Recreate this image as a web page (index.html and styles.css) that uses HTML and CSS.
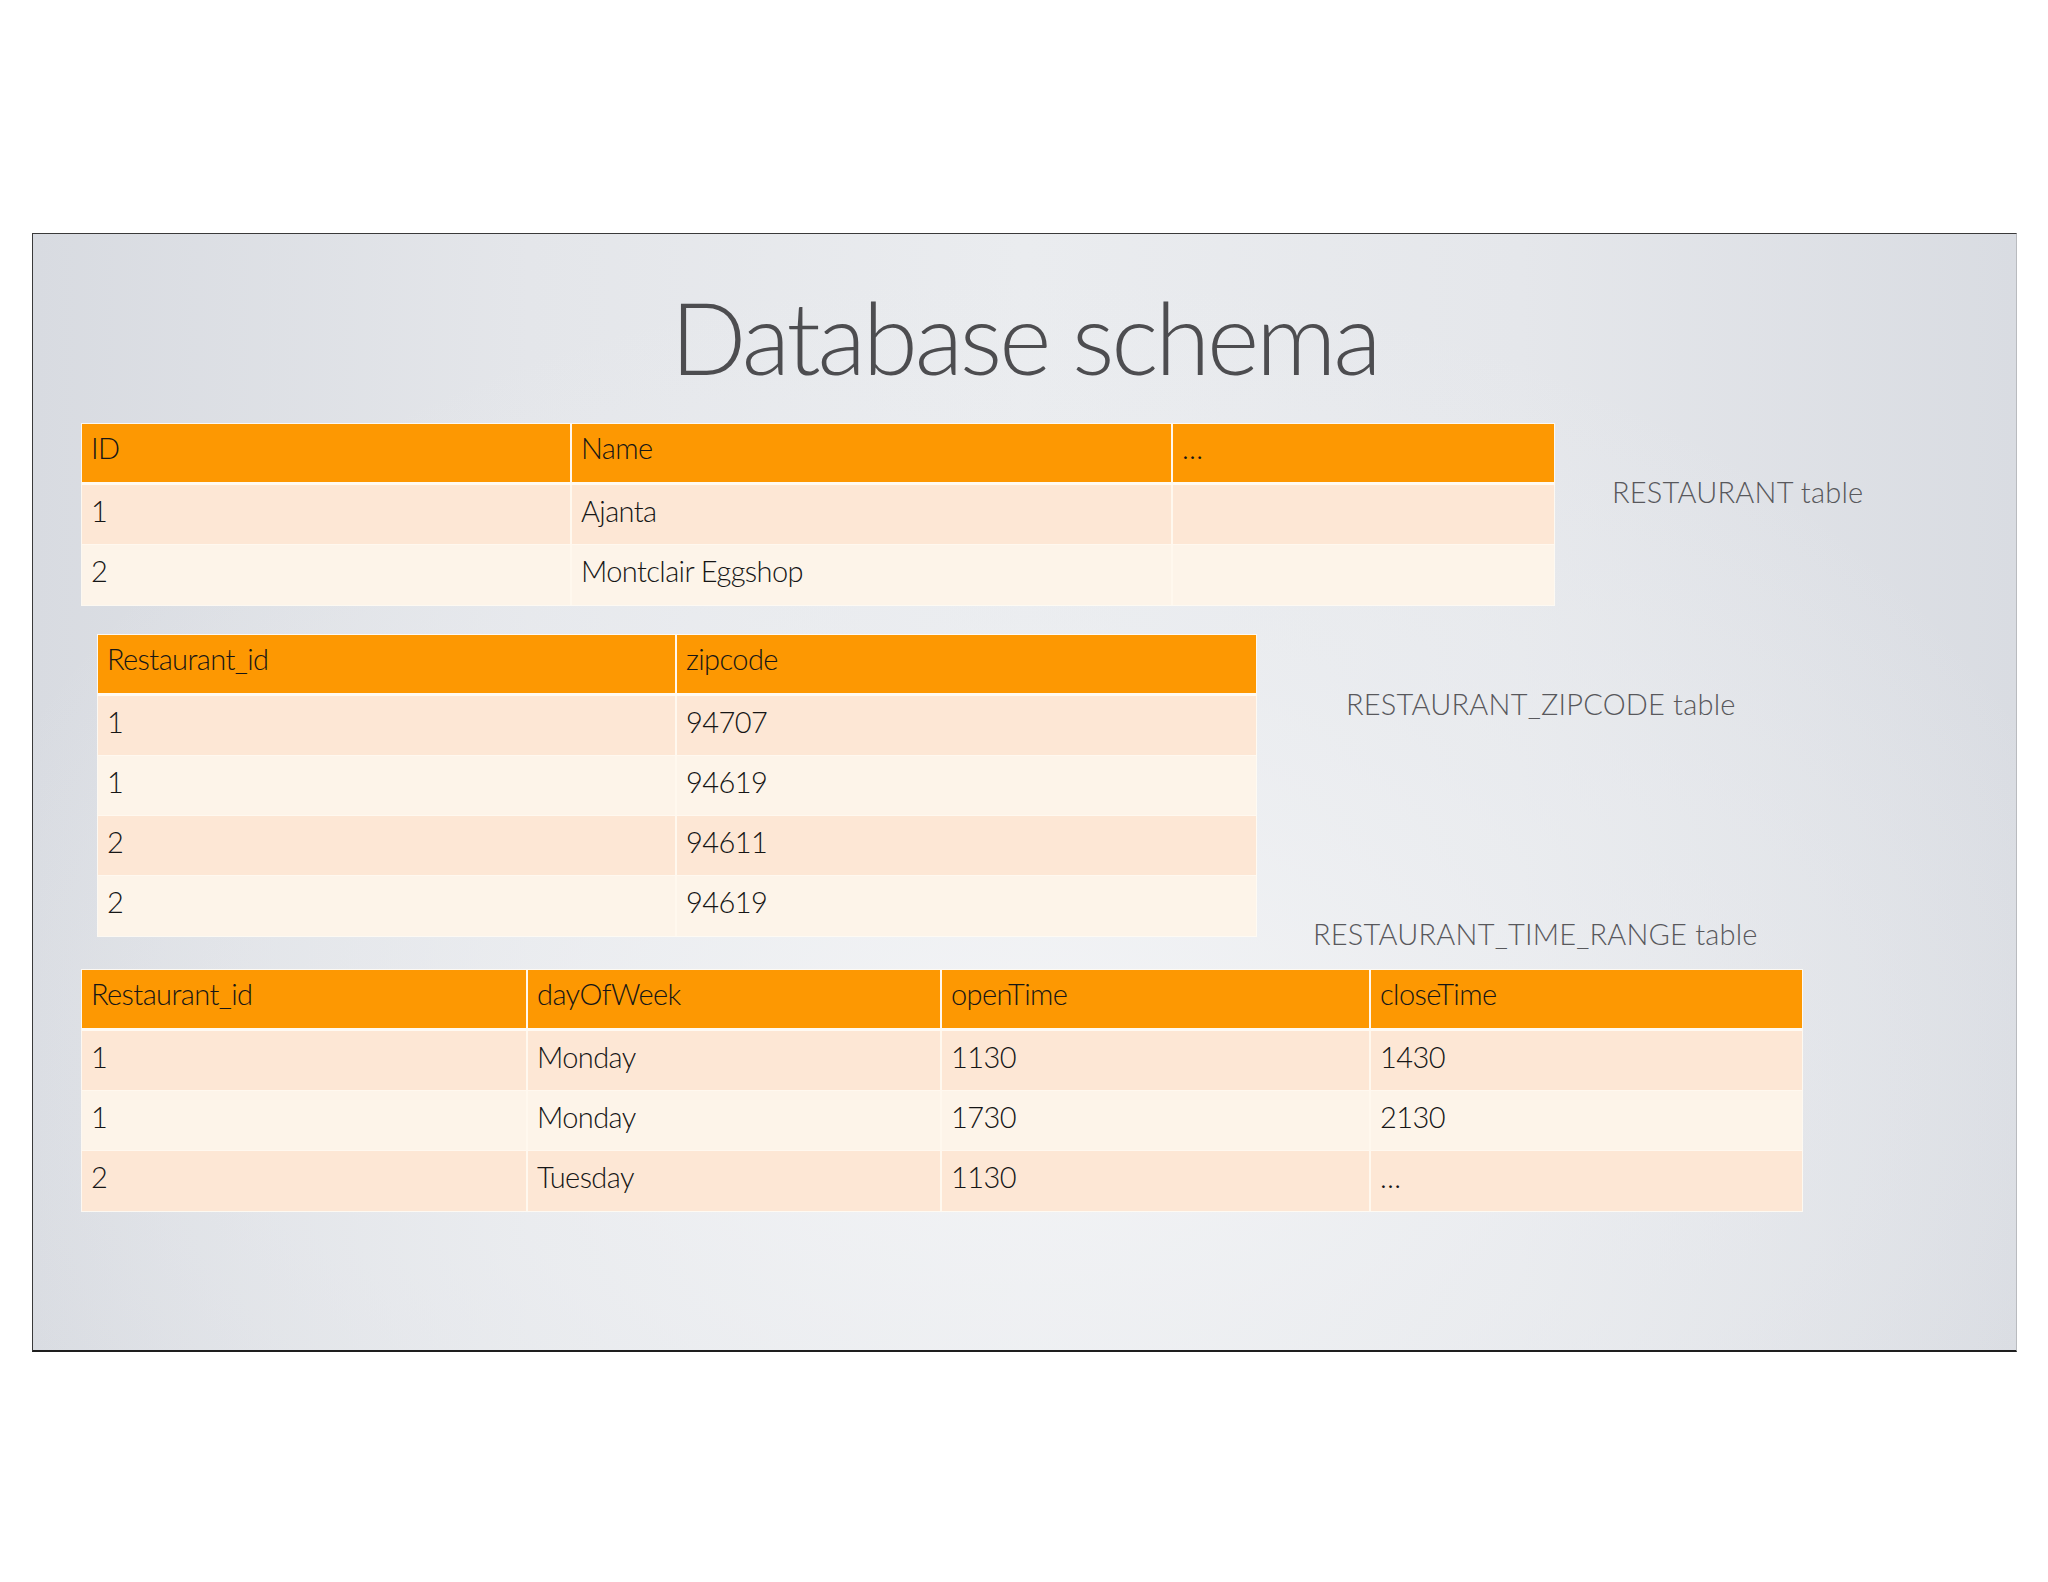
FILE: index.html
```html
<!DOCTYPE html>
<html lang="en">
<head>
<meta charset="utf-8">
<title>Database schema</title>
<link rel="stylesheet" href="styles.css">
</head>
<body>
<div class="slide">
  <h1 class="title">Database schema</h1>

  <div class="section s1">
    <div class="dbtable t1">
      <div class="row head"><div class="cell">ID</div><div class="cell">Name</div><div class="cell">…</div></div>
      <div class="row odd"><div class="cell">1</div><div class="cell">Ajanta</div><div class="cell"></div></div>
      <div class="row even"><div class="cell">2</div><div class="cell">Montclair Eggshop</div><div class="cell"></div></div>
    </div>
    <div class="label l1">RESTAURANT table</div>
  </div>

  <div class="section s2">
    <div class="dbtable t2">
      <div class="row head"><div class="cell">Restaurant_id</div><div class="cell">zipcode</div></div>
      <div class="row odd"><div class="cell">1</div><div class="cell">94707</div></div>
      <div class="row even"><div class="cell">1</div><div class="cell">94619</div></div>
      <div class="row odd"><div class="cell">2</div><div class="cell">94611</div></div>
      <div class="row even"><div class="cell">2</div><div class="cell">94619</div></div>
    </div>
    <div class="labels">
      <div class="label l2">RESTAURANT_ZIPCODE table</div>
      <div class="label l3">RESTAURANT_TIME_RANGE table</div>
    </div>
  </div>

  <div class="dbtable t3">
    <div class="row head"><div class="cell">Restaurant_id</div><div class="cell">dayOfWeek</div><div class="cell">openTime</div><div class="cell">closeTime</div></div>
    <div class="row odd"><div class="cell">1</div><div class="cell">Monday</div><div class="cell">1130</div><div class="cell">1430</div></div>
    <div class="row even"><div class="cell">1</div><div class="cell">Monday</div><div class="cell">1730</div><div class="cell">2130</div></div>
    <div class="row odd"><div class="cell">2</div><div class="cell">Tuesday</div><div class="cell">1130</div><div class="cell">…</div></div>
  </div>
</div>
</body>
</html>
```

FILE: styles.css
```css
* { box-sizing: border-box; }

html, body {
  margin: 0;
  padding: 0;
  background: #ffffff;
}

body {
  width: 2048px;
  height: 1582px;
  overflow: hidden;
  font-family: Lato, "Open Sans", "Liberation Sans", sans-serif;
  font-weight: 300;
}

.slide {
  width: 1985px;
  height: 1119px;
  margin: 233px 0 0 32px;
  border-top: 1px solid #3a3a3a;
  border-left: 1px solid #3a3a3a;
  border-right: 1px solid #b9bbbf;
  border-bottom: 2px solid #1e1e1e;
  background:
    radial-gradient(ellipse 70% 90% at 50% 75%, rgba(243,244,246,0.95) 0%, rgba(236,238,241,0.6) 45%, rgba(236,238,241,0) 80%),
    linear-gradient(90deg, #d8dbe1 0%, #e4e6ea 25%, #eaecef 50%, #e5e7eb 75%, #d9dce2 100%);
  display: flex;
  flex-direction: column;
  align-items: flex-start;
}

.title {
  align-self: center;
  margin: 42px 0 0 0;
  font-size: 100px;
  line-height: 120px;
  font-weight: 300;
  color: #4d4d50;
  letter-spacing: -3.2px;
}

.section {
  display: flex;
  align-items: flex-start;
}

.s1 { margin: 28px 0 0 49px; }
.s2 { margin: 30px 0 0 65px; }

.dbtable {
  box-shadow: 0 0 0 1px rgba(255, 251, 243, 0.9);
}

.row {
  display: grid;
  height: 60px;
  border-bottom: 1px solid #fff8ef;
}

.row.head {
  height: 61px;
  background: #fd9802;
  border-bottom: 3px solid #fffaf3;
}

.row.odd { background: #fde7d5; }
.row.even { background: #fdf4e9; }
.row:last-child { border-bottom: none; }

.cell {
  padding: 8px 0 0 9px;
  font-size: 29px;
  line-height: 35px;
  color: #161616;
  letter-spacing: -0.6px;
  white-space: nowrap;
  border-right: 2px solid #fff8ee;
}

.head .cell { padding-top: 6px; }

.cell:last-child { border-right: none; }

.t1 { width: 1472px; }
.t1 .row { grid-template-columns: 490px 601px 381px; }

.t2 { width: 1158px; }
.t2 .row { grid-template-columns: 579px 579px; }

.t3 { width: 1720px; margin: 19px 0 0 49px; }
.t3 .row { grid-template-columns: 446px 414px 429px 431px; }

.label {
  font-size: 29px;
  line-height: 35px;
  color: #58585c;
  letter-spacing: 0.2px;
  white-space: nowrap;
}

.l1 { margin: 50px 0 0 58px; }

.labels {
  display: flex;
  flex-direction: column;
  align-items: flex-start;
}

.l2 { margin: 51px 0 0 90px; }
.l3 { margin: 195px 0 0 57px; }
```
